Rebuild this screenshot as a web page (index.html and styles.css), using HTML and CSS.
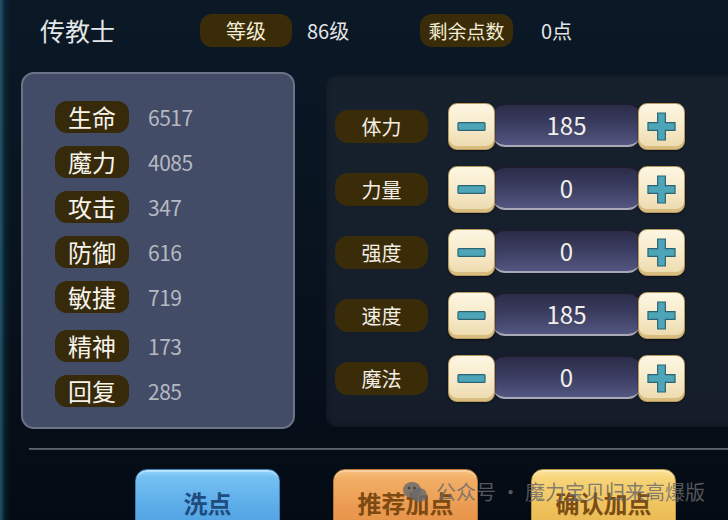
FILE: index.html
```html
<!DOCTYPE html>
<html lang="zh-CN">
<head>
    <meta charset="UTF-8">
    <title>加点</title>
    <link rel="stylesheet" href="styles.css">
</head>
<body>
    <div class="screen">
        <div class="top-bar">
            <div class="job-name">传教士</div>
            <div class="tag">等级</div>
            <div class="tag-value level-value">86级</div>
            <div class="tag tag-wide">剩余点数</div>
            <div class="tag-value points-value">0点</div>
        </div>

        <div class="main">
            <div class="stat-panel">
                <div class="stat-row"><span class="stat-name">生命</span><span class="stat-value">6517</span></div>
                <div class="stat-row"><span class="stat-name">魔力</span><span class="stat-value">4085</span></div>
                <div class="stat-row"><span class="stat-name">攻击</span><span class="stat-value">347</span></div>
                <div class="stat-row"><span class="stat-name">防御</span><span class="stat-value">616</span></div>
                <div class="stat-row"><span class="stat-name">敏捷</span><span class="stat-value">719</span></div>
                <div class="stat-row spaced"><span class="stat-name">精神</span><span class="stat-value">173</span></div>
                <div class="stat-row"><span class="stat-name">回复</span><span class="stat-value">285</span></div>
            </div>

            <div class="point-panel">
                <div class="point-row">
                    <div class="point-name">体力</div>
                    <div class="stepper">
                        <div class="step-btn"><svg viewBox="0 0 30 30"><rect x="1" y="11" width="28" height="8" rx="1"/></svg></div>
                        <div class="step-field">185</div>
                        <div class="step-btn"><svg viewBox="0 0 30 30"><path d="M11 1h8v10h10v8H19v10h-8V19H1v-8h10z"/></svg></div>
                    </div>
                </div>
                <div class="point-row">
                    <div class="point-name">力量</div>
                    <div class="stepper">
                        <div class="step-btn"><svg viewBox="0 0 30 30"><rect x="1" y="11" width="28" height="8" rx="1"/></svg></div>
                        <div class="step-field">0</div>
                        <div class="step-btn"><svg viewBox="0 0 30 30"><path d="M11 1h8v10h10v8H19v10h-8V19H1v-8h10z"/></svg></div>
                    </div>
                </div>
                <div class="point-row">
                    <div class="point-name">强度</div>
                    <div class="stepper">
                        <div class="step-btn"><svg viewBox="0 0 30 30"><rect x="1" y="11" width="28" height="8" rx="1"/></svg></div>
                        <div class="step-field">0</div>
                        <div class="step-btn"><svg viewBox="0 0 30 30"><path d="M11 1h8v10h10v8H19v10h-8V19H1v-8h10z"/></svg></div>
                    </div>
                </div>
                <div class="point-row">
                    <div class="point-name">速度</div>
                    <div class="stepper">
                        <div class="step-btn"><svg viewBox="0 0 30 30"><rect x="1" y="11" width="28" height="8" rx="1"/></svg></div>
                        <div class="step-field">185</div>
                        <div class="step-btn"><svg viewBox="0 0 30 30"><path d="M11 1h8v10h10v8H19v10h-8V19H1v-8h10z"/></svg></div>
                    </div>
                </div>
                <div class="point-row">
                    <div class="point-name">魔法</div>
                    <div class="stepper">
                        <div class="step-btn"><svg viewBox="0 0 30 30"><rect x="1" y="11" width="28" height="8" rx="1"/></svg></div>
                        <div class="step-field">0</div>
                        <div class="step-btn"><svg viewBox="0 0 30 30"><path d="M11 1h8v10h10v8H19v10h-8V19H1v-8h10z"/></svg></div>
                    </div>
                </div>
            </div>
        </div>

        <div class="divider"></div>

        <div class="actions">
            <button class="action-btn btn-blue">洗点</button>
            <button class="action-btn btn-orange">推荐加点</button>
            <button class="action-btn btn-yellow">确认加点</button>
        </div>

        <div class="watermark">
            <svg class="wm-icon" viewBox="0 0 26 22">
                <ellipse cx="10" cy="9" rx="9" ry="8"/>
                <ellipse cx="17" cy="14" rx="8" ry="7"/>
                <circle cx="7" cy="7" r="1.3" class="eye"/>
                <circle cx="12.5" cy="7" r="1.3" class="eye"/>
            </svg>
            <span>公众号 · 魔力宝贝归来高爆版</span>
        </div>
    </div>
</body>
</html>
```

FILE: styles.css
```css
/* Base */
html, body {
    margin: 0;
    padding: 0;
    width: 728px;
    height: 520px;
    overflow: hidden;
    background-color: #06111c;
    font-family: "Noto Sans CJK SC", "Noto Sans", sans-serif;
}

.screen {
    position: relative;
    width: 728px;
    height: 520px;
    overflow: hidden;
    background:
        linear-gradient(to right, rgba(40, 110, 130, 0.75) 0, rgba(20, 60, 80, 0.3) 5px, rgba(6, 17, 28, 0) 11px),
        linear-gradient(to bottom, #0b1826 0%, #08131f 50%, #040b14 100%);
}

/* Header */
.top-bar {
    display: flex;
    align-items: center;
    height: 33px;
    margin-top: 14px;
    padding-left: 40px;
}

.job-name {
    width: 160px;
    flex-shrink: 0;
    font-size: 25px;
    color: #e4e6e8;
    line-height: 33px;
}

.tag {
    width: 92px;
    height: 33px;
    flex-shrink: 0;
    line-height: 33px;
    border-radius: 12px;
    background-color: #3a2c09;
    color: #f3ecd6;
    font-size: 20px;
    text-align: center;
}

.tag-wide {
    width: 93px;
    font-size: 19px;
}

.tag-value {
    font-size: 20px;
    color: #e2e4e6;
    flex-shrink: 0;
}

.level-value {
    margin-left: 15px;
    width: 113px;
}

.points-value {
    margin-left: 28px;
}

/* Main */
.main {
    display: flex;
    align-items: flex-start;
    margin-top: 25px;
}

.stat-panel {
    flex-shrink: 0;
    margin-left: 21px;
    width: 270px;
    height: 353px;
    border: 2px solid #6c7389;
    border-radius: 13px;
    background-color: #434c66;
    display: flex;
    flex-direction: column;
    gap: 13px;
}

.stat-row {
    display: flex;
    align-items: center;
    height: 32px;
    padding-left: 32px;
}

.stat-row:first-child {
    margin-top: 27px;
}

.stat-row.spaced {
    margin-top: 4px;
}

.stat-name {
    width: 74px;
    height: 32px;
    line-height: 32px;
    border-radius: 12px;
    background-color: #362a0b;
    color: #f7f4ec;
    font-size: 24px;
    text-align: center;
}

.stat-value {
    margin-left: 19px;
    font-size: 21px;
    color: #b6b8c2;
    letter-spacing: -0.5px;
}

.point-panel {
    flex-shrink: 0;
    margin-left: 31px;
    margin-top: 3px;
    width: 420px;
    height: 352px;
    border-radius: 11px;
    background: linear-gradient(to bottom, #17212e, #141d29);
    box-shadow: inset 0 0 6px rgba(0, 0, 0, 0.4);
    padding-top: 28px;
    box-sizing: border-box;
    display: flex;
    flex-direction: column;
    gap: 16px;
}

.point-row {
    display: flex;
    align-items: center;
    padding-left: 9px;
    height: 47px;
}

.point-name {
    width: 93px;
    height: 33px;
    line-height: 33px;
    border-radius: 13px;
    background-color: #3a2c09;
    color: #f3efe4;
    font-size: 20px;
    text-align: center;
}

.stepper {
    display: flex;
    align-items: flex-start;
    margin-left: 20px;
    height: 47px;
}

.step-btn {
    position: relative;
    z-index: 1;
    width: 47px;
    height: 47px;
    box-sizing: border-box;
    border-radius: 9px;
    border: 1px solid #b89a5e;
    background: linear-gradient(to bottom, #fdf6e2 0%, #f6e9c8 55%, #ecd9ac 100%);
    box-shadow: inset 0 -3px 0 #d9bd80, 0 1px 2px rgba(0, 0, 0, 0.5);
    display: flex;
    align-items: center;
    justify-content: center;
}

.step-btn svg {
    width: 29px;
    height: 29px;
    fill: #4da5b7;
    stroke: #2a6474;
    stroke-width: 1.2;
}

.step-field {
    width: 147px;
    height: 44px;
    margin: 0 -2px;
    box-sizing: border-box;
    border-radius: 12px;
    border-top: 2px solid #1c1c2c;
    border-bottom: 2px solid #a8a8b6;
    background: linear-gradient(to bottom, #2b2c48 0%, #3c3e62 50%, #535680 100%);
    color: #f1efe9;
    font-size: 24px;
    line-height: 40px;
    text-align: center;
}

/* Divider */
.divider {
    margin-top: 19px;
    margin-left: 29px;
    height: 2px;
    background: linear-gradient(to bottom, #6a6e76, #44484e);
}

/* Bottom actions */
.actions {
    display: flex;
    gap: 53px;
    margin-top: 19px;
    padding-left: 135px;
}

.action-btn {
    flex-shrink: 0;
    width: 145px;
    height: 62px;
    border-radius: 12px 12px 0 0;
    font-family: "Noto Sans CJK SC", sans-serif;
    font-size: 24px;
    font-weight: bold;
    padding: 4px 0 0;
    cursor: pointer;
}

.btn-blue {
    border: 1px solid #3d7fb8;
    background: linear-gradient(to bottom, #9ad6fa 0%, #74c0f2 12%, #5eaeea 55%, #4e9fe0 100%);
    box-shadow: inset 0 2px 0 rgba(255, 255, 255, 0.35);
    color: #1e4c7e;
}

.btn-orange {
    border: 1px solid #b8753a;
    background: linear-gradient(to bottom, #f7c07e 0%, #f2ae66 15%, #eb9c52 60%, #e48f44 100%);
    box-shadow: inset 0 2px 0 rgba(255, 255, 255, 0.3);
    color: #7d4a12;
}

.btn-yellow {
    border: 1px solid #b89440;
    background: linear-gradient(to bottom, #fbe39a 0%, #f6d478 15%, #efc35e 60%, #e8b64e 100%);
    box-shadow: inset 0 2px 0 rgba(255, 255, 255, 0.3);
    color: #7b4c14;
}

/* Watermark over the buttons */
.watermark {
    position: absolute;
    left: 402px;
    top: 477px;
    display: flex;
    align-items: center;
    gap: 8px;
    color: rgba(105, 105, 108, 0.82);
    font-size: 20px;
    white-space: nowrap;
}

.wm-icon {
    width: 26px;
    height: 22px;
    fill: rgba(105, 105, 108, 0.82);
}

.wm-icon .eye {
    fill: rgba(30, 30, 30, 0.6);
}
```
